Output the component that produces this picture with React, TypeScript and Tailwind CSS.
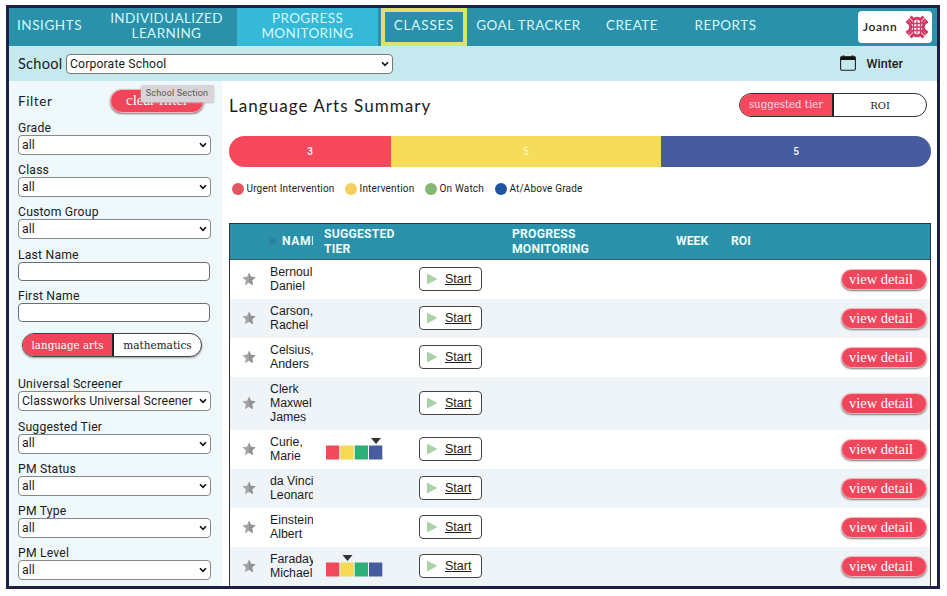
import React from 'react';

const ROUND = "font-['Lato','Open_Sans',sans-serif]";
const SERIF = "font-['Liberation_Serif',serif]";
const SLAB = "font-['DejaVu_Serif',serif]";

function Chevron() {
  return (
    <svg width="8" height="6" viewBox="0 0 8 6" className="shrink-0">
      <path d="M1 1.2 4 4.3 7 1.2" fill="none" stroke="#111" strokeWidth="1.6" />
    </svg>
  );
}

function Label({ text }: { text: string }) {
  return <div className="h-[15px] text-[12.200px] leading-[16px] tracking-[0.200px]">{text}</div>;
}

function Field({ label, value }: { label: string; value: string }) {
  return (
    <div className="mb-[7.170px] h-[35px]">
      <Label text={label} />
      <div className="flex h-5 w-[193px] items-center justify-between rounded-[4px] border border-[#85898c] bg-white pr-[3px] pl-[3px] text-[12.300px] tracking-[0.080px] whitespace-nowrap">
        <span>{value}</span>
        <Chevron />
      </div>
    </div>
  );
}

function Input({ label }: { label: string }) {
  return (
    <div className="mb-[7px]">
      <Label text={label} />
      <div className="h-[19px] w-[192px] rounded-[4px] border border-[#6b6f72] bg-white" />
    </div>
  );
}

function Avatar() {
  return (
    <svg width="24" height="24" viewBox="0 0 24 24" fill="none" stroke="#d23a66">
      <path d="M5.500 1.500 8.500 4.500q3.500-2.500 7 0l3-3M5.500 22.500l3-3q3.500 2.500 7 0l3 3M1.500 6l3 2.500q2.500 3.500 0 7l-3 2.500M22.500 6l-3 2.500q-2.500 3.500 0 7l3 2.500" strokeWidth="3" />
      <path d="m3.500 4 4 4M20.500 4l-4 4M3.500 20l4-4M20.500 20l-4-4" strokeWidth="1.800" />
      <path d="M8.500 6v12M12 5.500v13M15.500 6v12M6 8.500h12M5.500 12h13M6 15.500h12" strokeWidth="1.300" />
    </svg>
  );
}

function Tier({ at }: { at: number }) {
  return (
    <svg width="60" height="24" viewBox="0 0 60 24" className="relative -top-px ml-[2px]">
      <path d={at === 3 ? 'M45 1h10l-5 6z' : 'M16.500 1h10l-5 6z'} fill="#333" />
      <rect x="0" y="8.500" width="13.300" height="14" fill="#f14a5d" />
      <rect x="14.300" y="8.500" width="13.300" height="14" fill="#f4d955" />
      <rect x="28.700" y="8.500" width="13.300" height="14" fill="#2cb078" />
      <rect x="43" y="8.500" width="13.300" height="14" fill="#465c9f" />
    </svg>
  );
}

const rows: { name: string[]; tier?: number }[] = [
  { name: ['Bernoul', 'Daniel'] },
  { name: ['Carson,', 'Rachel'] },
  { name: ['Celsius,', 'Anders'] },
  { name: ['Clerk', 'Maxwel', 'James'] },
  { name: ['Curie,', 'Marie'], tier: 3 },
  { name: ['da Vinci', 'Leonardo'] },
  { name: ['Einstein', 'Albert'] },
  { name: ['Faraday', 'Michael'], tier: 1 },
];

const legend = [
  { dot: 'bg-[#e2545f]', text: 'Urgent Intervention', width: 'w-[113px]' },
  { dot: 'bg-[#f5cf5c]', text: 'Intervention', width: 'w-[80px]' },
  { dot: 'bg-[#82b873]', text: 'On Watch', width: 'w-[70px]' },
  { dot: 'bg-[#2155a0]', text: 'At/Above Grade', width: 'w-[90px]' },
];

const COLS = 'grid grid-cols-[40px_43px_11px_95px_93px_164px_55px_110px_89px]';

export default function App() {
  return (
    <div className="h-[596px] w-[947px] overflow-hidden bg-white pt-[5px] pl-[6px] font-[Roboto,sans-serif] text-[#1b1b1b]">
      <div className="flex h-[584px] w-[934px] flex-col overflow-hidden border-[3px] border-[#1e1f45] bg-white">
        <nav className={`flex h-[38px] shrink-0 items-center bg-[#2b90a9] text-center text-[13.500px] leading-[15px] whitespace-nowrap text-[#d3fbfd] ${ROUND}`}>
          <div className="w-[87px] pb-[4px] pl-[8px] text-left tracking-[0.550px]">INSIGHTS</div>
          <div className="w-[141px] pb-[3px] tracking-[0.400px]">INDIVIDUALIZED<br />LEARNING</div>
          <div className="flex h-full w-[141px] items-center justify-center bg-[#36b8d7] pb-[3px] tracking-[0.400px]">
            <span>PROGRESS<br />MONITORING</span>
          </div>
          <div className="ml-[3px] flex h-full w-[86px] items-center justify-center border-4 border-[#dce26b] pb-[4px] tracking-[0.800px]">CLASSES</div>
          <div className="w-[126px] pr-[3px] pb-[4px] tracking-[0.500px]">GOAL TRACKER</div>
          <div className="w-[78px] pb-[4px] tracking-[0.500px]">CREATE</div>
          <div className="w-[110px] pr-px pb-[4px] tracking-[0.500px]">REPORTS</div>
          <div className="mr-[5px] ml-auto flex h-[32px] w-[74px] items-center justify-between rounded-[4px] bg-white pr-[3px] pl-[5px] text-[12px] text-[#222]">
            <span className="pb-[2px] font-semibold tracking-[0.600px]">Joann</span>
            <Avatar />
          </div>
        </nav>

        <div className="flex h-[35px] shrink-0 items-center bg-[#c6e9ef] pl-[9px]">
          <span className={`w-[48px] text-[14.500px] tracking-[0.300px] ${ROUND}`}>School</span>
          <div className="flex h-[20px] w-[327px] items-center justify-between rounded-[4px] border border-[#777] bg-white pt-px pr-[3px] pl-[3px] text-[12.200px] tracking-[0.150px]">
            <span>Corporate School</span>
            <Chevron />
          </div>
          <svg width="16" height="16" viewBox="0 0 16 16" className="mr-[11px] mb-[2px] ml-auto">
            <path d="M.5 1.500h2V.5h2v1h7v-1h2v1h2V5H.5z" fill="#111" />
            <rect x="0.600" y="1.700" width="14.800" height="13.500" rx="1.500" fill="none" stroke="#222" strokeWidth="1.100" />
          </svg>
          <span className="mr-[34px] text-[12.500px] leading-[14px] font-medium">Winter</span>
        </div>

        <div className="flex min-h-0 flex-1">
          <aside className="w-[213px] shrink-0 overflow-hidden bg-[#eff8fb] pl-[9px]">
            <div className="relative flex h-[39px] items-center">
              <span className={`w-[92px] pt-px text-[13.500px] tracking-[0.600px] ${ROUND}`}>Filter</span>
              <div className={`flex h-[24px] w-[94px] items-center justify-center rounded-full border border-[#f9b3ba] bg-[#ef465b] text-[15px] text-white shadow-[0_1px_2px_#777] ${SERIF}`}>clear filter</div>
              <div className="absolute top-[4px] left-[123px] flex h-[17px] w-[73px] items-center justify-center rounded-[2px] bg-[#d8d4d9] pr-px text-[9px] tracking-[0.200px] text-[#555] shadow-[0_1px_2px_#bbb]">School Section</div>
            </div>
            <Field label="Grade" value="all" />
            <Field label="Class" value="all" />
            <Field label="Custom Group" value="all" />
            <div className="pt-px"><Input label="Last Name" /></div>
            <Input label="First Name" />
            <div className={`mt-[11px] mb-[19px] ml-[4px] flex h-[24px] w-[180px] overflow-hidden rounded-full border border-[#444] bg-white shadow-[0_1px_2px_#999] ${SLAB}`}>
              <div className="flex w-[91px] items-center justify-center border-r-2 border-[#222] bg-[#ef465b] text-[10.300px] text-white">language arts</div>
              <div className="flex flex-1 items-center justify-center text-[10.500px]">mathematics</div>
            </div>
            <Field label="Universal Screener" value="Classworks Universal Screener" />
            <Field label="Suggested Tier" value="all" />
            <Field label="PM Status" value="all" />
            <Field label="PM Type" value="all" />
            <Field label="PM Level" value="all" />
          </aside>

          <main className="flex w-[709px] flex-col overflow-hidden pl-[7px]">
            <div className="flex h-[55px] shrink-0 items-start justify-between pt-[12px] pr-[4px]">
              <h1 className={`text-[17px] leading-[25px] tracking-[1.050px] ${ROUND}`}>Language Arts Summary</h1>
              <div className={`flex h-[24px] w-[188px] overflow-hidden rounded-full border border-[#333] ${SLAB}`}>
                <div className="flex w-[94px] items-center justify-center border-r-2 border-[#222] bg-[#f5485c] text-[10.200px] text-[#fde]">suggested tier</div>
                <div className="flex flex-1 items-center justify-center text-[10px]">ROI</div>
              </div>
            </div>
            <div className="flex h-[31px] w-[702px] shrink-0 overflow-hidden rounded-full text-center text-[10px] leading-[31px] font-medium text-white">
              <div className="w-[162px] bg-[#f5485c]">3</div>
              <div className="w-[270px] bg-[#f6dc5b] text-[#fff3b0]">5</div>
              <div className="w-[270px] bg-[#465c9f]">5</div>
            </div>
            <div className="flex h-[56px] shrink-0 pt-[14px] pl-[3px] text-[10px] leading-[16px] tracking-[0.170px] whitespace-nowrap">
              {legend.map((item) => (
                <div key={item.text} className={`flex h-4 items-center gap-[2.500px] ${item.width}`}>
                  <i className={`size-[12px] shrink-0 rounded-full ${item.dot}`} />
                  {item.text}
                </div>
              ))}
            </div>
            <div className="w-[702px] border-x border-t border-[#333]">
              <div className={`${COLS} h-[36px] items-center border-b border-[#34606c] bg-[#2b90a9] text-[12.200px] leading-[14.500px] font-bold text-[#eaffff]`}>
                <span />
                <span className="flex items-center overflow-hidden tracking-[0.600px]"><i className="mr-[5px] ml-[-1px] size-[7px] shrink-0 rounded-full bg-[#28839a]" /><span className="pl-px">NAME</span></span>
                <span />
                <span className="tracking-[0.200px]">SUGGESTED<br />TIER</span>
                <span />
                <span className="tracking-[0.200px]">PROGRESS<br />MONITORING</span>
                <span>WEEK</span>
                <span>ROI</span>
                <span />
              </div>
              {rows.map((row) => (
                <div key={row.name[0]} className={`${COLS} items-center odd:bg-[#eff4f8] even:bg-white ${row.name.length === 3 ? 'h-[53px]' : 'h-[39px]'}`}>
                  <svg width="14" height="14" viewBox="0 0 14 14" className="mb-[2px] ml-[12px]">
                    <path d="m7 .5 1.900 4.200 4.700.5-3.500 3.200 1 4.800L7 10.800l-4.100 2.400 1-4.800L.4 5.200l4.700-.5z" fill="#a4a4a4" />
                    <path d="m7 .5 1.900 4.200 4.700.5-3.500 3.200 1 4.800L7 10.800z" fill="#929292" />
                  </svg>
                  <div className="overflow-hidden pb-[2px] font-['Liberation_Sans',sans-serif] text-[12.300px] leading-[14px] whitespace-nowrap">
                    {row.name.map((part) => <div key={part}>{part}</div>)}
                  </div>
                  <span />
                  <div>{row.tier !== undefined && <Tier at={row.tier} />}</div>
                  <div className="mb-px flex h-[24px] w-[63px] items-center rounded-[4px] border border-[#444] bg-white pl-[7px] font-['Liberation_Sans',sans-serif] text-[12.500px]">
                    <svg width="11" height="12" viewBox="0 0 11 12" className="mr-[7px]"><path d="M0 .5 10.500 6 0 11.500z" fill="#a9d3a6" /></svg>
                    <span className="underline">Start</span>
                  </div>
                  <span />
                  <span />
                  <span />
                  <div className={`flex h-[21px] w-[86px] items-center rounded-full border border-[#fbb6bd] bg-[#ef465b] pl-[7px] text-[14.500px] text-white shadow-[0_1px_2px_#777] ${SERIF}`}>view detail</div>
                </div>
              ))}
            </div>
          </main>
        </div>
      </div>
    </div>
  );
}
